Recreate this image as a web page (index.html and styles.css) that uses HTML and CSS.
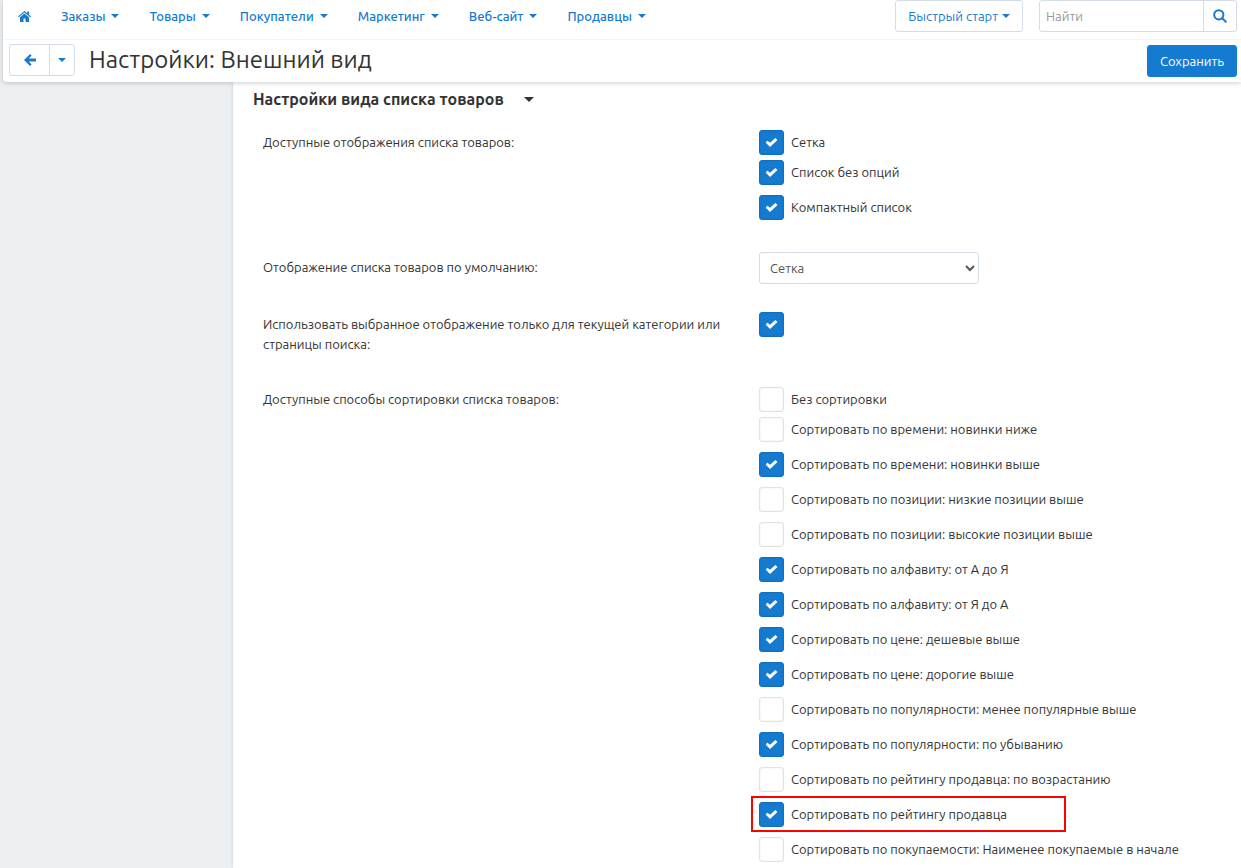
FILE: index.html
```html
<!DOCTYPE html>
<html lang="ru">
<head>
<meta charset="utf-8">
<meta name="viewport" content="width=device-width, initial-scale=1">
<title>Настройки: Внешний вид</title>
<link rel="stylesheet" href="styles.css">
</head>
<body>
<header class="header">
  <div class="navbar">
    <nav class="nav">
      <a class="nav-home" href="#" aria-label="Главная"><svg class="icon-home" viewBox="0 0 13 11" aria-hidden="true"><path d="M6.5 0 0 5.4l.8.9 5.7-4.7 5.7 4.7.8-.9-2-1.7V.5H9.2v1.7z"/><path d="M6.5 2.5 2 6.2V11h3.5V7.5h2V11H11V6.2z"/></svg></a>
      <a class="nav-link" href="#">Заказы<span class="caret"></span></a>
      <a class="nav-link" href="#">Товары<span class="caret"></span></a>
      <a class="nav-link" href="#">Покупатели<span class="caret"></span></a>
      <a class="nav-link" href="#">Маркетинг<span class="caret"></span></a>
      <a class="nav-link" href="#">Веб-сайт<span class="caret"></span></a>
      <a class="nav-link" href="#">Продавцы<span class="caret"></span></a>
    </nav>
    <button class="btn btn-start" type="button">Быстрый старт<span class="caret"></span></button>
    <form class="search">
      <input class="search-input" type="text" placeholder="Найти" aria-label="Найти">
      <button class="search-button" type="button" aria-label="Искать"><svg class="icon-search" viewBox="0 0 14 14" aria-hidden="true"><circle cx="5.8" cy="5.8" r="4.6"/><path d="m9.2 9.2 3.6 3.6"/></svg></button>
    </form>
  </div>
  <div class="actions">
    <div class="back-group">
      <button class="btn-back" type="button" aria-label="Назад"><svg class="icon-back" viewBox="0 0 12 12" aria-hidden="true"><path d="M0 6 6 0l1.6 1.6-2.8 2.8H12v3.2H4.8l2.8 2.8L6 12z"/></svg></button>
      <button class="btn-history" type="button" aria-label="История"><span class="caret"></span></button>
    </div>
    <h1 class="title">Настройки: Внешний вид</h1>
    <button class="btn btn-primary" type="button">Сохранить</button>
  </div>
</header>
<div class="layout">
  <aside class="sidebar"></aside>
  <main class="content">
    <h2 class="section-title">Настройки вида списка товаров<span class="caret"></span></h2>
    <div class="fields">
      <div class="field field-list" role="group" aria-labelledby="views">
        <span class="label" id="views">Доступные отображения списка товаров:</span>
        <div class="options">
          <label class="option"><input class="check" type="checkbox" checked>Сетка</label>
          <label class="option"><input class="check" type="checkbox" checked>Список без опций</label>
          <label class="option"><input class="check" type="checkbox" checked>Компактный список</label>
        </div>
      </div>
      <div class="field">
        <label class="label label-select" for="default-view">Отображение списка товаров по умолчанию:</label>
        <div class="options">
          <select class="select" id="default-view"><option>Сетка</option><option>Список без опций</option><option>Компактный список</option></select>
        </div>
      </div>
      <div class="field field-list">
        <label class="label" for="current-only">Использовать выбранное отображение только для текущей категории или страницы поиска:</label>
        <div class="options"><input class="check" type="checkbox" id="current-only" checked></div>
      </div>
      <div class="field field-list" role="group" aria-labelledby="sorting">
        <span class="label" id="sorting">Доступные способы сортировки списка товаров:</span>
        <div class="options">
          <label class="option"><input class="check" type="checkbox">Без сортировки</label>
          <label class="option"><input class="check" type="checkbox">Сортировать по времени: новинки ниже</label>
          <label class="option"><input class="check" type="checkbox" checked>Сортировать по времени: новинки выше</label>
          <label class="option"><input class="check" type="checkbox">Сортировать по позиции: низкие позиции выше</label>
          <label class="option"><input class="check" type="checkbox">Сортировать по позиции: высокие позиции выше</label>
          <label class="option"><input class="check" type="checkbox" checked>Сортировать по алфавиту: от А до Я</label>
          <label class="option"><input class="check" type="checkbox" checked>Сортировать по алфавиту: от Я до А</label>
          <label class="option"><input class="check" type="checkbox" checked>Сортировать по цене: дешевые выше</label>
          <label class="option"><input class="check" type="checkbox" checked>Сортировать по цене: дорогие выше</label>
          <label class="option"><input class="check" type="checkbox">Сортировать по популярности: менее популярные выше</label>
          <label class="option"><input class="check" type="checkbox" checked>Сортировать по популярности: по убыванию</label>
          <label class="option"><input class="check" type="checkbox">Сортировать по рейтингу продавца: по возрастанию</label>
          <label class="option option-marked"><input class="check" type="checkbox" checked>Сортировать по рейтингу продавца</label>
          <label class="option"><input class="check" type="checkbox">Сортировать по покупаемости: Наименее покупаемые в начале</label>
        </div>
      </div>
    </div>
  </main>
</div>
</body>
</html>
```
FILE: styles.css
```css
* { box-sizing: border-box; }

body {
  margin: 0;
  min-height: 100vh;
  display: flex;
  flex-direction: column;
  background: #ecf0f3;
  color: #333;
  font: 13px/20px Ubuntu, "Noto Sans", "Open Sans", sans-serif;
}

button, input, select { font: inherit; margin: 0; }

.header {
  position: relative;
  z-index: 1;
  margin-left: 3px;
  background: #fff;
  border-radius: 0 0 0 4px;
  box-shadow: 0 1px 5px rgba(0, 0, 0, 0.2);
}

.navbar {
  display: flex;
  align-items: flex-start;
  padding: 0 4px 7px 15px;
  border-bottom: 1px solid #f4f4f4;
}

.nav {
  flex: 1;
  display: flex;
  align-items: center;
  gap: 30px;
  height: 32px;
}

.nav-home { display: flex; }
.icon-home { width: 13px; height: 11px; fill: #147bd1; }

.nav-link {
  display: flex;
  align-items: center;
  gap: 6px;
  color: #147bd1;
  font-weight: 500;
  text-decoration: none;
}

.caret {
  display: inline-block;
  border: 4px solid transparent;
  border-top-color: currentColor;
  border-bottom: 0;
}

.btn {
  height: 32px;
  padding: 0 12px;
  border: 1px solid #d3dbe6;
  border-radius: 3px;
  background: #fff;
  color: #147bd1;
}

.btn-start {
  display: flex;
  align-items: center;
  gap: 4px;
  margin-right: 16px;
}

.search {
  display: flex;
  height: 32px;
  border: 1px solid #d3dbe6;
  border-radius: 3px;
}

.search-input {
  width: 163px;
  padding: 0 6px;
  border: 0;
  background: none;
  color: #333;
}
.search-input::placeholder { color: #999; opacity: 1; }

.search-button {
  display: flex;
  align-items: center;
  justify-content: center;
  width: 33px;
  padding: 0;
  border: 0;
  border-left: 1px solid #d3dbe6;
  background: none;
}
.icon-search {
  width: 14px;
  height: 14px;
  fill: none;
  stroke: #147bd1;
  stroke-width: 2;
  stroke-linecap: round;
}

.actions {
  display: flex;
  align-items: flex-start;
  gap: 14px;
  padding: 4px 4px 5px 6px;
}

.back-group {
  display: flex;
  height: 32px;
  border: 1px solid #d3dbe6;
  border-radius: 3px;
}
.btn-back, .btn-history {
  display: flex;
  align-items: center;
  justify-content: center;
  padding: 0;
  border: 0;
  background: none;
  color: #147bd1;
}
.btn-back { width: 39px; }
.btn-history { width: 25px; border-left: 1px solid #d3dbe6; }
.icon-back { width: 12px; height: 12px; fill: #147bd1; }

.title {
  flex: 1;
  margin: 0;
  font-size: 24px;
  line-height: 32px;
  font-weight: 400;
}

.btn-primary {
  margin-top: 1px;
  background: #147bd1;
  border-color: #147bd1;
  color: #fff;
}

.layout {
  flex: 1;
  display: flex;
}
.sidebar { width: 233px; flex: none; }

.content {
  flex: 1;
  padding: 7px 20px 0;
  background: #fff;
  box-shadow: 0 0 3px rgba(0, 0, 0, 0.15);
}

.section-title {
  display: flex;
  align-items: center;
  gap: 20px;
  margin: 0 0 21px;
  font-size: 16px;
  line-height: 20px;
  font-weight: 700;
}
.section-title .caret { border-width: 5px 5px 0; }

.fields {
  display: flex;
  flex-direction: column;
  gap: 28px;
  padding-left: 10px;
}
.field {
  display: grid;
  grid-template-columns: minmax(0, 466px) minmax(0, 1fr);
  column-gap: 30px;
}
.field-list { padding-bottom: 4px; }

.label { padding: 2px 0 1px; }
.label-select { padding-top: 5px; }

.options {
  display: flex;
  flex-direction: column;
  align-items: flex-start;
  gap: 10px;
}
.option {
  display: flex;
  align-items: flex-start;
  gap: 7px;
  line-height: 24px;
}
.option:first-child { margin-bottom: -5px; }
.option-marked {
  width: 315px;
  margin: -6px -8px -5px;
  padding: 4px 6px 3px;
  border: 2px solid #f00;
}

.check {
  appearance: none;
  flex: none;
  width: 25px;
  height: 25px;
  border: 1px solid #e2e2e2;
  border-radius: 3px;
  background: #fff;
  box-shadow: inset 0 0 2px rgba(0, 0, 0, 0.1);
}
.check:checked {
  display: grid;
  place-items: center;
  border-color: #1170be;
  background: #147bd1;
}
.check:checked::before {
  content: "";
  width: 12px;
  height: 9px;
  background: #fff;
  clip-path: polygon(0 50%, 16% 30%, 38% 54%, 82% 0, 100% 22%, 38% 100%);
}

.select {
  width: 220px;
  height: 32px;
  padding: 0 6px;
  border: 1px solid #d3dbe6;
  border-radius: 3px;
  background: #fff;
  color: #555;
}
```
